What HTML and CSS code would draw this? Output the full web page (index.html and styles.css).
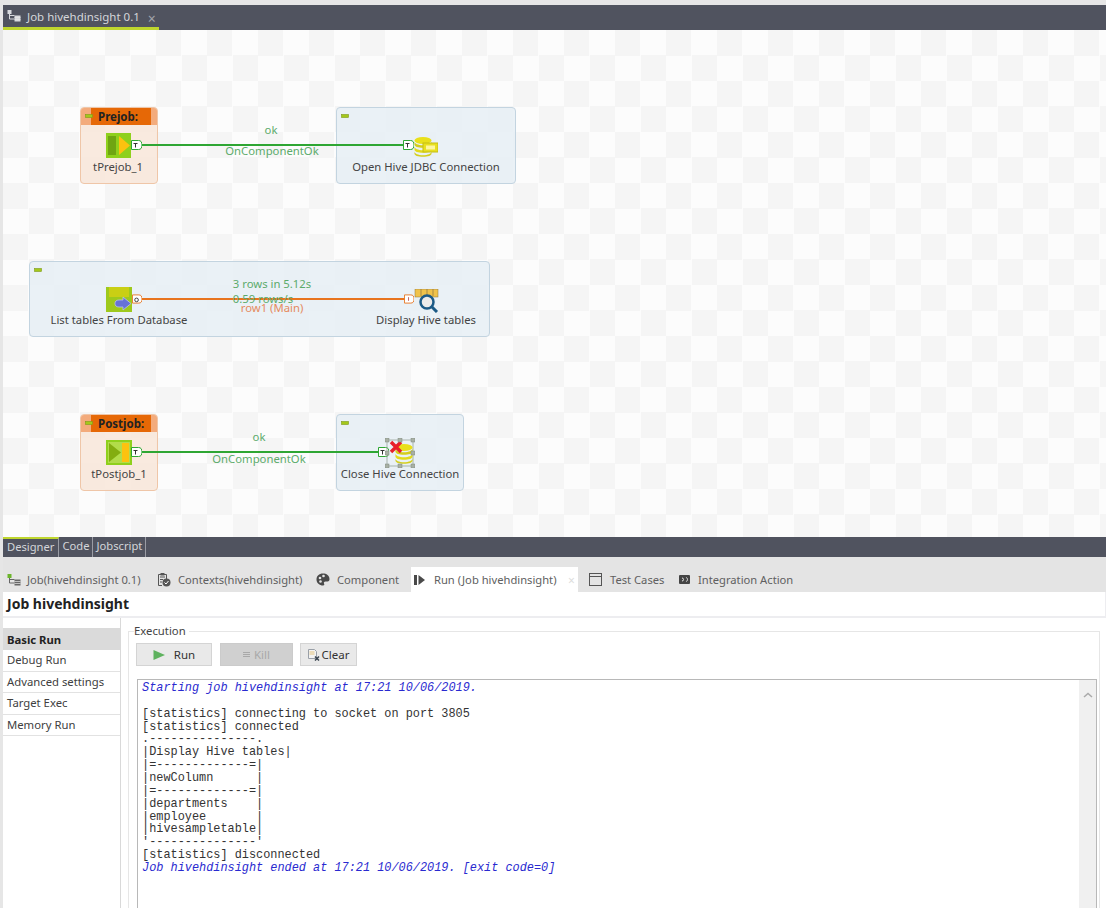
FILE: index.html
```html
<!DOCTYPE html>
<html lang="en">
<head>
<meta charset="utf-8">
<title>Job hivehdinsight 0.1</title>
<link rel="stylesheet" href="styles.css">
</head>
<body>
<svg class="defs" width="0" height="0" aria-hidden="true">
  <defs>
    <symbol id="jobicon" viewBox="0 0 14 12">
      <path d="M2.500 3v6h5M2.500 5.500h5" fill="none" stroke="currentColor" stroke-width="1"/>
      <rect x="0.500" y="0" width="4" height="4" fill="var(--dot)"/>
      <rect x="7.500" y="5.500" width="6" height="6" fill="currentColor"/>
      <path d="M7.500 7.500h6M7.500 9.500h6" stroke="#e6e6e6" stroke-width="0.700"/>
    </symbol>
    <symbol id="connT" viewBox="0 0 11 10">
      <path d="M0.500 0.500H7.500A3.500 4.500 0 0 1 7.500 9.500H0.500Z" fill="#fff" stroke="currentColor"/>
      <path d="M2.500 3.500h4M4.500 3.500v4" stroke="#333" stroke-width="1" fill="none"/>
    </symbol>
    <symbol id="minus" viewBox="0 0 8 4">
      <rect x="0.500" y="0.500" width="7" height="3" fill="#a4c81a" stroke="#7e9a18" stroke-width="0.600"/>
    </symbol>
    <symbol id="db" viewBox="0 0 20 20" preserveAspectRatio="none">
      <ellipse cx="10" cy="3.500" rx="9.500" ry="3.500" fill="#e9e01a"/>
      <path d="M.5 4.500v3c0 2 4 3.300 9.500 3.300S19.500 9.500 19.500 7.500v-3c0 2-4 3.800-9.500 3.800S.5 6.500.5 4.500Z" fill="#d4ce1c"/>
      <path d="M.5 9.500v3c0 2 4 3.300 9.500 3.300s9.500-1.300 9.500-3.300v-3c0 2-4 3.800-9.500 3.800S.5 11.500.5 9.500Z" fill="#e2da1b"/>
      <path d="M.5 14.500v2c0 2 4 3.300 9.500 3.300s9.500-1.300 9.500-3.300v-2c0 2-4 3.800-9.500 3.800S.5 16.500.5 14.500Z" fill="#d4ce1c"/>
    </symbol>
  </defs>
</svg>
<div class="app">
  <header class="titlebar">
    <div class="editor-tab">
      <svg class="job-ic ic-light" width="14" height="12"><use href="#jobicon"/></svg>
      <span>Job hivehdinsight 0.1</span>
      <span class="tab-x">×</span>
    </div>
  </header>

  <main class="canvas">
    <div class="subjob orange sj-pre">
      <div class="sj-head"><span class="sj-title">Prejob:</span></div>
      <svg class="sj-minus-o" width="8" height="4"><use href="#minus"/></svg>
    </div>
    <div class="subjob blue sj-open"><svg class="sj-minus" width="8" height="4"><use href="#minus"/></svg></div>
    <div class="subjob blue sj-main"><svg class="sj-minus" width="8" height="4"><use href="#minus"/></svg></div>
    <div class="subjob orange sj-post">
      <div class="sj-head"><span class="sj-title">Postjob:</span></div>
      <svg class="sj-minus-o" width="8" height="4"><use href="#minus"/></svg>
    </div>
    <div class="subjob blue sj-close"><svg class="sj-minus" width="8" height="4"><use href="#minus"/></svg></div>

    <div class="link green-link l1"></div>
    <div class="link orange-link l2"></div>
    <div class="link green-link l3"></div>

    <svg class="comp c-pre" width="25" height="25" viewBox="0 0 25 25">
      <rect width="25" height="25" fill="#8fd01c"/>
      <rect x="2" y="3" width="8" height="19" fill="#6fa512"/>
      <path d="M13 3L24 12.500L13 22Z" fill="#fcc20f"/>
    </svg>
    <svg class="comp c-main" width="26" height="25" viewBox="0 0 26 25">
      <rect width="26" height="25" fill="#9ec91c"/>
      <rect x="3" y="0" width="20" height="10" fill="#c9cf14"/>
      <path d="M13 13H17V10L25 16.500L17 23V20H13C10 20 9 18.500 9 16.500S10 13 13 13Z" fill="#6672d8" stroke="#b8bff0" stroke-width="0.800"/>
    </svg>
    <svg class="comp c-post" width="26" height="25" viewBox="0 0 26 25">
      <rect width="26" height="25" fill="#b2dc4a"/>
      <rect x="1" y="1" width="24" height="23" fill="none" stroke="#8fd01c" stroke-width="2"/>
      <path d="M3 3L15 12.500L3 22Z" fill="#83ad10"/>
      <rect x="16" y="3" width="7" height="19" fill="#fcc20f"/>
    </svg>

    <svg class="conn c1a" width="11" height="10"><use href="#connT"/></svg>
    <svg class="conn c1b" width="11" height="10"><use href="#connT"/></svg>
    <svg class="conn c2a" width="10" height="10" viewBox="0 0 11 10"><path d="M.5.5H7.500A3.500 4.500 0 0 1 7.500 9.500H.5Z" fill="#fff" stroke="#e8741e"/><circle cx="5" cy="6" r="2" fill="none" stroke="#333"/></svg>
    <svg class="conn c2b" width="10" height="10" viewBox="0 0 11 10"><path d="M.5.5H7.500A3.500 4.500 0 0 1 7.500 9.500H.5Z" fill="#fff" stroke="#e8741e"/><path d="M5 3v4" stroke="#b55"/></svg>
    <svg class="conn c3a" width="11" height="10"><use href="#connT"/></svg>
    <svg class="conn c3b" width="11" height="10"><use href="#connT"/></svg>

    <svg class="comp c-hivedb" width="24" height="20" viewBox="0 0 24 20">
      <use href="#db" width="18" height="20" x="0" y="0"/>
      <rect x="9" y="6" width="15" height="9" fill="#e8e020" stroke="#c4bd15"/>
      <rect x="12" y="8.500" width="9" height="4" fill="#fdf6a0"/>
    </svg>
    <svg class="comp c-log" width="25" height="24" viewBox="0 0 25 24">
      <rect x="1" y="0" width="23" height="8" fill="#f0c24a" stroke="#8a7440" stroke-width="0.500"/>
      <path d="M7 0v7M13 0v7M19 0v7" stroke="#8a7440" stroke-width="0.700"/>
      <circle cx="13" cy="13" r="6.500" fill="#ecebea" stroke="#1c5a86" stroke-width="2.500"/>
      <path d="M18 18L23 23" stroke="#1c5a86" stroke-width="3"/>
    </svg>
    <svg class="comp c-closedb" width="30" height="30" viewBox="0 0 30 30">
      <rect x="2" y="2" width="26" height="26" fill="none" stroke="#8e9a8e" stroke-width="0.700"/>
      <use href="#db" x="10" y="6" width="18" height="20"/>
      <path d="M6 4L16 14M16 4L6 14" stroke="#e8202a" stroke-width="3.500"/>
      <g fill="#a8b0a4" stroke="#808a80" stroke-width="0.500">
        <rect x="0" y="0" width="4" height="4"/><rect x="13" y="0" width="4" height="4"/><rect x="26" y="0" width="4" height="4"/>
        <rect x="0" y="13" width="4" height="4"/><rect x="26" y="13" width="4" height="4"/>
        <rect x="0" y="26" width="4" height="4"/><rect x="13" y="26" width="4" height="4"/><rect x="26" y="26" width="4" height="4"/>
      </g>
    </svg>

    <span class="lbl n t-pre">tPrejob_1</span>
    <span class="lbl n t-open">Open Hive JDBC Connection</span>
    <span class="lbl n t-list">List tables From Database</span>
    <span class="lbl n t-disp">Display Hive tables</span>
    <span class="lbl n t-post">tPostjob_1</span>
    <span class="lbl n t-close">Close Hive Connection</span>

    <span class="lbl g t-ok1">ok</span>
    <span class="lbl g t-on1">OnComponentOk</span>
    <span class="lbl g t-rows">3 rows in 5.12s</span>
    <span class="lbl g t-rate">0.59 rows/s</span>
    <span class="lbl o t-row1">row1 (Main)</span>
    <span class="lbl g t-ok2">ok</span>
    <span class="lbl g t-on2">OnComponentOk</span>
  </main>

  <nav class="designer-tabs">
    <span class="dtab active">Designer</span>
    <span class="dtab">Code</span>
    <span class="dtab">Jobscript</span>
  </nav>

  <nav class="view-tabs">
    <span class="vtab tab-job">
      <svg class="job-ic ic-dark" width="14" height="12"><use href="#jobicon"/></svg>Job(hivehdinsight 0.1)
    </span>
    <span class="vtab tab-ctx">
      <svg width="14" height="14" viewBox="0 0 14 14"><path d="M1.500 1.500h8v5M5 12.500H1.500v-11" fill="none" stroke="#555"/><path d="M3 4h5M3 6.500h3M3 9h2" stroke="#555"/><rect x="3.500" y="0" width="4" height="2.500" fill="#555"/><circle cx="9.500" cy="9.500" r="4" fill="#555"/><path d="M7.500 9.500l1.500 1.500 2.500-3" stroke="#fff" fill="none"/></svg>Contexts(hivehdinsight)
    </span>
    <span class="vtab tab-comp">
      <svg width="14" height="13" viewBox="0 0 14 13"><path d="M7 .5C3 .5.500 3 .500 6.500c0 3.500 3 6 6.500 6 1.500 0 1.500-1 1-2-.5-1 0-2 1.500-2h2c1.500 0 2-1 2-2.500C13.500 2.500 10.500.5 7 .5Z" fill="#4a4a4a"/><circle cx="4" cy="5" r="1.300" fill="#e4e4e4"/><circle cx="7.500" cy="3" r="1.300" fill="#e4e4e4"/><circle cx="4.500" cy="8.500" r="1.300" fill="#e4e4e4"/></svg>Component
    </span>
    <span class="vtab tab-run active">
      <svg width="11" height="10" viewBox="0 0 11 10"><rect x="0" y="0" width="3" height="10" fill="#4a4a4a"/><path d="M4.500 0L11 5L4.500 10Z" fill="#4a4a4a"/></svg>Run (Job hivehdinsight)<span class="run-x">×</span>
    </span>
    <span class="vtab tab-test">
      <svg width="13" height="13" viewBox="0 0 13 13"><rect x=".5" y=".5" width="12" height="12" fill="none" stroke="#555"/><path d="M.5 3.500h12" stroke="#555"/></svg>Test Cases
    </span>
    <span class="vtab tab-int">
      <svg width="11" height="9" viewBox="0 0 11 9"><rect width="11" height="9" rx="1" fill="#444"/><path d="M3 3a1.500 1.500 0 0 1 0 3M7 2.500c2 .5 2 3.500 0 4" stroke="#e4e4e4" fill="none"/></svg>Integration Action
    </span>
  </nav>

  <h1 class="job-head">Job hivehdinsight</h1>

  <section class="run-body">
    <ul class="side">
      <li class="selected">Basic Run</li>
      <li>Debug Run</li>
      <li>Advanced settings</li>
      <li>Target Exec</li>
      <li>Memory Run</li>
    </ul>
    <fieldset class="exec">
      <legend>Execution</legend>
      <div class="btns">
        <button class="btn b-run" type="button"><svg width="12" height="10" viewBox="0 0 12 10"><path d="M.5 0L12 5L.5 10Z" fill="#5fb25f"/></svg>Run</button>
        <button class="btn b-kill" type="button"><svg width="7" height="5" viewBox="0 0 7 5"><path d="M0 .5h7M0 2.500h7M0 4.500h7" stroke="#a8a8a8"/></svg>Kill</button>
        <button class="btn b-clear" type="button"><svg width="12" height="12" viewBox="0 0 12 12"><path d="M.5.5h6l2 2v7H.5Z" fill="#f3f3f3" stroke="#9aa0a8"/><path d="M1.500 3h5M1.500 5h5" stroke="#e0b860" stroke-width=".8"/><path d="M7 7.500l4 4M11 7.500l-4 4" stroke="#3a4550" stroke-width="1.500"/></svg>Clear</button>
      </div>
      <div class="console">
<pre class="log"><span class="blue-line">Starting job hivehdinsight at 17:21 10/06/2019.</span>

[statistics] connecting to socket on port 3805
[statistics] connected
.---------------.
|Display Hive tables|
|=-------------=|
|newColumn      |
|=-------------=|
|departments    |
|employee       |
|hivesampletable|
'---------------'
[statistics] disconnected
<span class="blue-line">Job hivehdinsight ended at 17:21 10/06/2019. [exit code=0]</span></pre>
        <div class="scroll"><svg width="10" height="6" viewBox="0 0 10 6"><path d="M1 5L5 1.500L9 5" fill="none" stroke="#aaa" stroke-width="1.500"/></svg></div>
      </div>
    </fieldset>
  </section>
</div>
</body>
</html>
```
FILE: styles.css
```css
* { box-sizing: border-box; }
html, body { margin: 0; padding: 0; }
body {
  width: 1106px;
  height: 908px;
  overflow: hidden;
  background: #e6e6e6;
  font-family: "Noto Sans", "Open Sans", "Liberation Sans", sans-serif;
  font-size: 11.500px;
  color: #333;
}
.defs { position: absolute; }
.app {
  height: 908px;
  padding: 5px 0 0 3px;
  display: flex;
  flex-direction: column;
}

/* top editor tab */
.titlebar {
  height: 25px;
  flex: none;
  background: #50535f;
  display: flex;
}
.editor-tab {
  width: 156px;
  height: 25px;
  border-bottom: 3px solid #bfd62e;
  display: flex;
  align-items: center;
  gap: 6px;
  padding-left: 4px;
  color: #d4d6da;
}
.tab-x { color: #a0a3ab; font-size: 14px; margin-left: 2px; position: relative; top: 2px; }
.job-ic { flex: none; }
.ic-light { color: #d8dade; --dot: #d8dade; }
.ic-dark { color: #666; --dot: #6cb52c; }

/* canvas */
.canvas {
  height: 507px;
  flex: none;
  position: relative;
  overflow: hidden;
  background-color: #fcfcfc;
  background-image: conic-gradient(#fcfcfc 25%, #f5f5f5 0 50%, #fcfcfc 0 75%, #f5f5f5 0);
  background-size: 51px 51px;
}
.subjob { position: absolute; border-radius: 4px; border: 1px solid; }
.orange { background: rgba(248, 232, 220, .9); border-color: #efc6a8; }
.blue { background: rgba(230, 238, 244, .85); border-color: #c3d4e0; }
.sj-pre { left: 77px; top: 77px; width: 78px; height: 77px; }
.sj-post { left: 77px; top: 384px; width: 78px; height: 77px; }
.sj-open { left: 333px; top: 77px; width: 180px; height: 77px; }
.sj-main { left: 26px; top: 231px; width: 461px; height: 76px; }
.sj-close { left: 333px; top: 384px; width: 128px; height: 77px; }
.sj-head {
  height: 17px;
  background: linear-gradient(90deg, #f3ab7c 10px, #e66806 10px, #e66806 70px, #f3ab7c 70px);
  border-radius: 3px 3px 0 0;
  padding-left: 17px;
}
.sj-title { font-weight: 700; font-size: 11.500px; line-height: 17px; color: #222; display: block; }
.sj-minus { position: absolute; left: 4px; top: 6px; }
.sj-minus-o { position: absolute; left: 4px; top: 6px; }

.link { position: absolute; height: 2px; }
.green-link { background: #2ea633; }
.orange-link { background: #e8741e; }
.l1 { left: 138px; top: 114px; width: 264px; }
.l2 { left: 138px; top: 268px; width: 265px; }
.l3 { left: 138px; top: 421px; width: 238px; }

.comp, .conn { position: absolute; display: block; }
.c-pre { left: 103px; top: 103px; }
.c-main { left: 103px; top: 257px; }
.c-post { left: 103px; top: 410px; }
.c-hivedb { left: 411px; top: 107px; }
.c-log { left: 411px; top: 259px; }
.c-closedb { left: 382px; top: 408px; }
.conn { color: #2ea633; }
.c1a { left: 128px; top: 110px; }
.c1b { left: 400px; top: 110px; }
.c2a { left: 129px; top: 264px; }
.c2b { left: 401px; top: 264px; }
.c3a { left: 128px; top: 417px; }
.c3b { left: 375px; top: 417px; }

.lbl { position: absolute; transform: translateX(-50%); white-space: nowrap; line-height: 16px; font-size: 11.300px; }
.n { color: #444; }
.g { color: #5cab6b; }
.o { color: #e58a5e; }
.t-pre { left: 115px; top: 129px; }
.t-open { left: 423px; top: 129px; }
.t-list { left: 116px; top: 282px; }
.t-disp { left: 423px; top: 282px; }
.t-post { left: 116px; top: 436px; }
.t-close { left: 397px; top: 436px; }
.t-ok1 { left: 268px; top: 92px; }
.t-on1 { left: 269px; top: 113px; }
.t-rows { left: 269px; top: 246px; }
.t-rate { left: 260px; top: 261px; }
.t-row1 { left: 269px; top: 270px; }
.t-ok2 { left: 256px; top: 399px; }
.t-on2 { left: 256px; top: 421px; }

/* designer tabs */
.designer-tabs {
  height: 20px;
  flex: none;
  background: #50535f;
  display: flex;
  color: #d4d6da;
  font-size: 11.200px;
}
.dtab {
  padding: 0 3px 0 3px;
  line-height: 18px;
  border-right: 1px solid #9a9ca4;
}
.dtab.active { border-top: 2px solid #bfd62e; line-height: 16px; padding-left: 4px; padding-right: 4px; }

/* view tabs */
.view-tabs {
  height: 35px;
  flex: none;
  background: #e4e4e4;
  display: flex;
  align-items: flex-end;
  color: #606060;
  font-size: 11.200px;
}
.vtab {
  display: flex;
  align-items: center;
  height: 25px;
  white-space: nowrap;
}
.vtab svg { flex: none; }
.tab-job { margin-left: 4px; gap: 6px; width: 150px; }
.tab-ctx { gap: 7px; width: 159px; }
.tab-comp { gap: 7px; width: 95px; }
.tab-run { background: #fff; width: 167px; padding-left: 3px; gap: 9px; position: relative; }
.run-x { color: #ddd; font-size: 12px; position: absolute; left: 157px; top: 5px; }
.tab-test { margin-left: 11px; gap: 8px; width: 90px; }
.tab-int { gap: 8px; }

/* heading */
.job-head {
  height: 26px;
  flex: none;
  margin: 0;
  padding-left: 4px;
  background: #fff;
  font-size: 14px;
  line-height: 24px;
  color: #222;
  font-weight: 700;
  border-bottom: 2px solid #ededf0;
  border-right: 1px solid #ededf0;
}

/* body */
.run-body {
  flex: 1;
  min-height: 0;
  display: flex;
  background: #fff;
}
.side {
  width: 118px;
  flex: none;
  margin: 0;
  padding: 10px 0 0;
  list-style: none;
  border-right: 1px solid #d9d9d9;
}
.side li {
  height: 21.500px;
  line-height: 20px;
  padding-left: 4px;
  border-bottom: 1px solid #e2e2e2;
  color: #404040;
  font-size: 11.300px;
}
.side li.selected { background: #dadada; font-weight: 700; color: #222; height: 22px; border-bottom: 0; line-height: 23px; }

.exec {
  flex: none;
  width: 972px;
  margin: 5px 0 0 7px;
  padding: 5px 0 0 7px;
  height: 300px;
  border: 1px solid #e6e6e6;
  border-bottom: 0;
  min-inline-size: 0;
}
.exec legend {
  padding: 0 3px 0 0;
  margin-left: -2px;
  font-size: 11.300px;
  line-height: 16px;
  color: #444;
}
.btns { display: flex; gap: 7px; margin-top: -1px; }
.btn {
  height: 23px;
  padding: 0;
  border: 1px solid #d4d4d4;
  background: #e9e9e9;
  font: inherit;
  color: #333;
  display: flex;
  align-items: center;
  justify-content: center;
}
.b-run { width: 76px; gap: 9px; }
.b-kill { width: 73px; gap: 4px; background: #d0d0d0; border-color: #cbcbcb; color: #a8a8a8; margin-left: 1px; }
.b-clear { width: 57px; gap: 2px; }
.console {
  margin-top: 13px;
  margin-left: 1px;
  width: 960px;
  height: 240px;
  border: 1px solid #b8b8b8;
  border-bottom: 0;
  display: flex;
  justify-content: space-between;
}
.log {
  margin: 0;
  padding: 2px 0 0 4px;
  font-family: "Liberation Mono", monospace;
  font-size: 11.880px;
  line-height: 12.860px;
  color: #333;
}
.blue-line { color: #2a2ad0; font-style: italic; }
.scroll {
  width: 17px;
  background: #f0f0f0;
  text-align: center;
  padding-top: 6px;
  flex: none;
}
```
